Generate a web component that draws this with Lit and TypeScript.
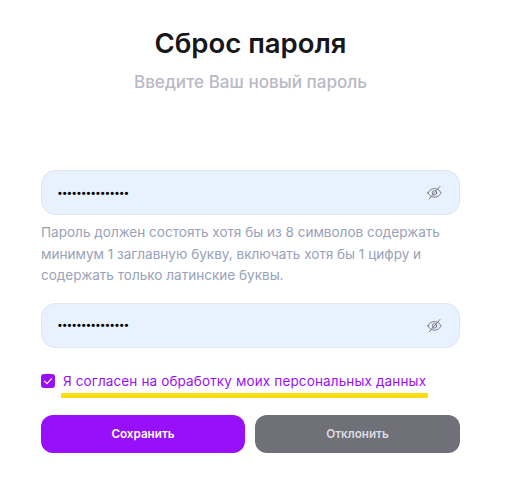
import { LitElement, html, css } from "lit";
import { customElement } from "lit/decorators.js";

const eye = html`<svg class="eye" viewBox="0 0 16 16" width="15" height="15" fill="none" stroke="#73747c" stroke-width="1" stroke-linecap="round" stroke-linejoin="round">
  <path d="M1 8.4C2.6 5.4 5 3.8 8 3.8s5.4 1.6 7 4.6c-1.6 3-4 4.6-7 4.6s-5.4-1.6-7-4.6Z"/>
  <circle cx="8" cy="8.4" r="2.4"/>
  <path d="M2.4 14.8 13.8 1.6"/>
</svg>`;

@customElement("app-root")
export class AppRoot extends LitElement {
  static styles = css`
    :host { display: block; width: 519px; height: 483px; background: #fff; font-family: Inter, "Noto Sans", sans-serif; box-sizing: border-box; padding: 0 59px 0 41px; }
    h1 { margin: 0; padding-top: 26px; font-size: 27.5px; line-height: 34px; font-weight: 600; color: #17171b; text-align: center; }
    .sub { margin-top: 11px; font-size: 17.1px; line-height: 22px; font-weight: 500; color: #b9b9c5; text-align: center; }
    .field { height: 45px; box-sizing: border-box; background: #e8f1fe; border: 1px solid #e1e6ef; border-radius: 14px; display: flex; align-items: center; justify-content: space-between; padding: 0 17px 0 16px; }
    .first { margin-top: 77px; }
    .second { margin-top: 16px; }
    .dots { font-family: "Liberation Sans", sans-serif; font-size: 11px; font-weight: 700; color: #000; letter-spacing: 0.9px; line-height: 16px; }
    .eye { display: block; }
    .hint { margin: 7px 0 0; font-size: 13.55px; line-height: 21.5px; color: #98a2b8; }
    .agree { margin-top: 23px; display: flex; align-items: center; gap: 8px; }
    .box { width: 14px; height: 14px; border-radius: 3px; background: #9810fa; display: flex; align-items: center; justify-content: center; flex: none; }
    .label { font-size: 13.5px; line-height: 20px; color: #9810fa; letter-spacing: 0.14px; white-space: nowrap; }
    .line { height: 5px; width: 367px; margin: 2px 0 0 20px; background: #fcdc12; }
    .buttons { margin-top: 17px; display: grid; grid-template-columns: 204px 205px; gap: 10px; }
    .btn { height: 38px; border-radius: 12px; font: 600 11.7px/38px Inter, sans-serif; color: #fff; text-align: center; }
    .save { background: #9810fa; }
    .cancel { background: #6f7078; color: #dcdce0; }
  `;

  render() {
    return html`
      <h1>Сброс пароля</h1>
      <div class="sub">Введите Ваш новый пароль</div>
      <div class="field first"><span class="dots">•••••••••••••••</span>${eye}</div>
      <p class="hint">Пароль должен состоять хотя бы из 8 символов содержать минимум 1 заглавную букву, включать хотя бы 1 цифру и содержать только латинские буквы.</p>
      <div class="field second"><span class="dots">•••••••••••••••</span>${eye}</div>
      <div class="agree">
        <span class="box"><svg viewBox="0 0 14 14" width="14" height="14" fill="none" stroke="#fff" stroke-width="1.1" stroke-linecap="round" stroke-linejoin="round"><path d="M3.4 7.2 6 9.6l4.6-5"/></svg></span>
        <span class="label">Я согласен на обработку моих персональных данных</span>
      </div>
      <div class="line"></div>
      <div class="buttons">
        <div class="btn save">Сохранить</div>
        <div class="btn cancel">Отклонить</div>
      </div>
    `;
  }
}
